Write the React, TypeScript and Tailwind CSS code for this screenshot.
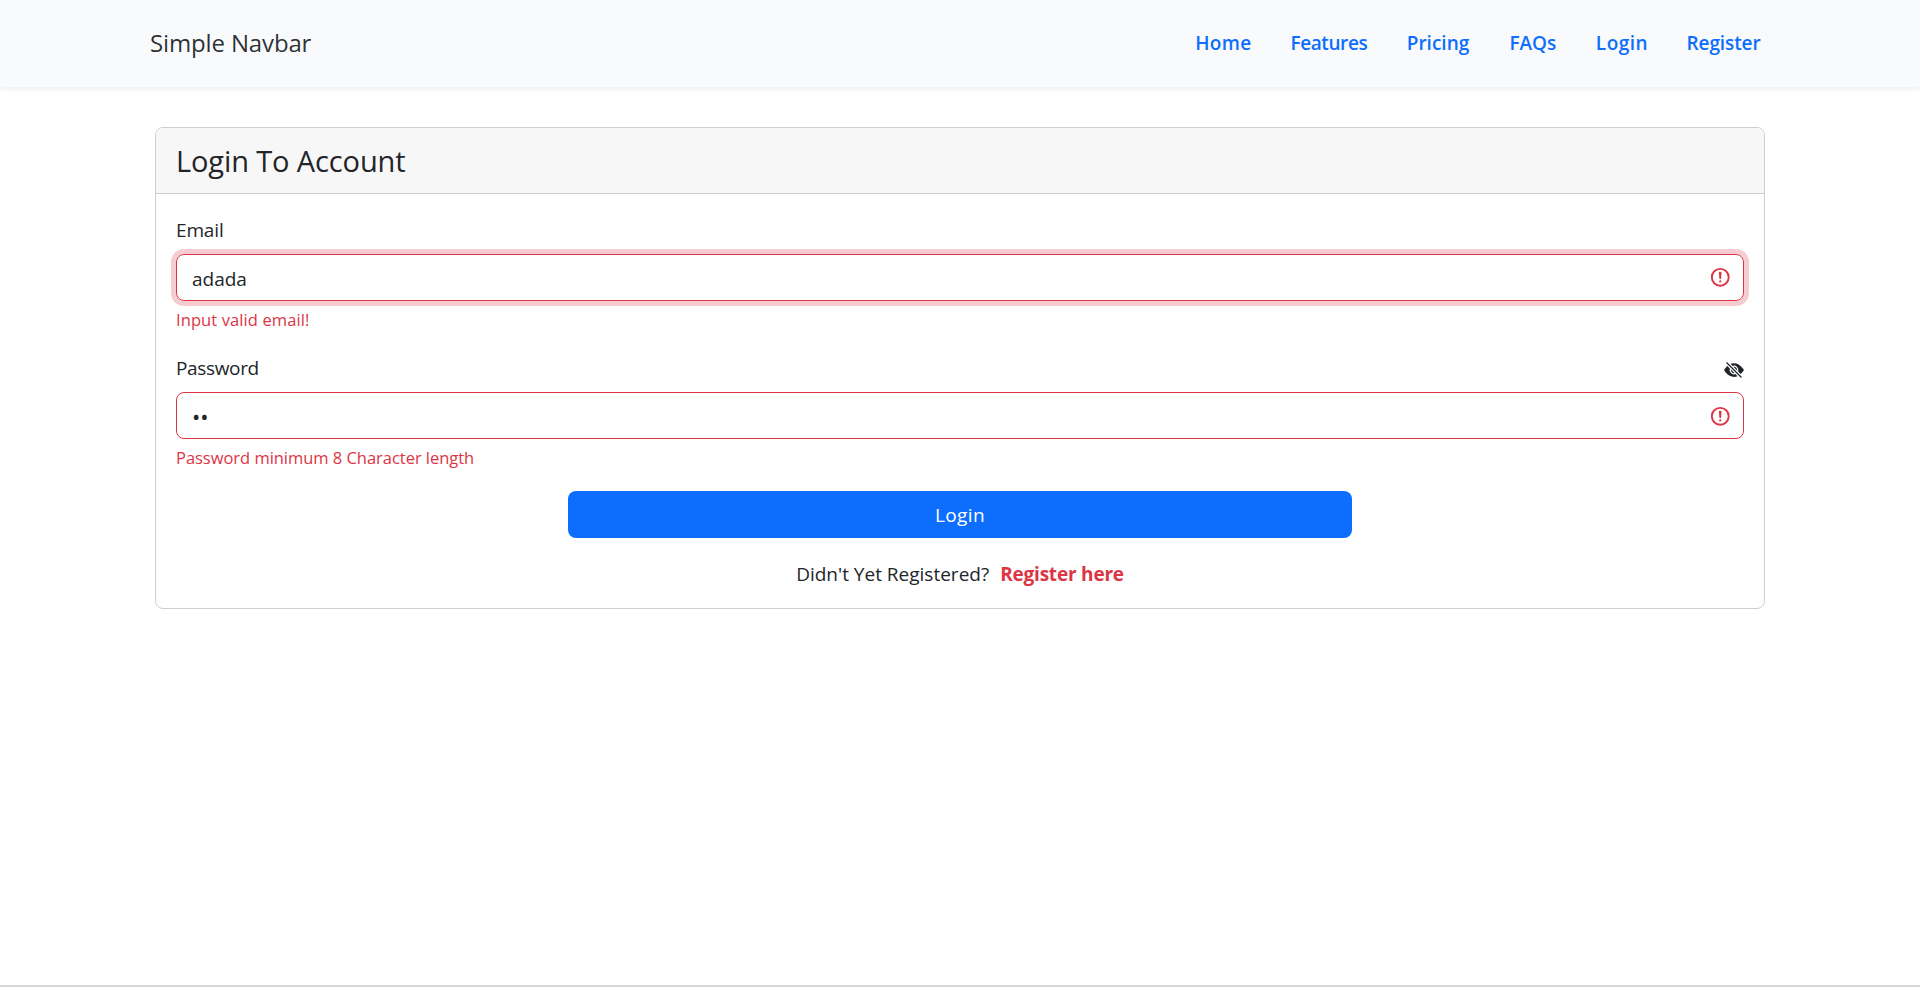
import React, { useState } from "react";
import { BsEyeFill, BsEyeSlashFill } from "react-icons/bs";

const links = [
  { label: "Home", style: "w-[55.2px] tracking-[0.3px]" },
  { label: "Features", style: "w-[76.3px] tracking-[-0.4px]" },
  { label: "Pricing", style: "w-[62.7px]" },
  { label: "FAQs", style: "w-[46.4px]" },
  { label: "Login", style: "w-[50.7px] tracking-[0.5px]" },
  { label: "Register", style: "w-[75.5px] tracking-[-0.1px]" },
];

function Navbar() {
  return (
    <nav className="h-[87px] bg-[#f8fafc] shadow-[0_2px_5px_rgba(0,0,0,0.075)]">
      <div className="mx-auto flex h-full w-[1620px] items-center justify-between pr-2">
        <a
          href="#"
          className="pb-px text-[24px] leading-9 tracking-[-0.14px] text-[#212529]/95"
        >
          Simple Navbar
        </a>
        <ul className="flex gap-10 pb-px text-[19px] leading-[30px] font-semibold text-[#0d6efd]">
          {links.map(({ label, style }) => (
            <li key={label} className={`whitespace-nowrap ${style}`}>
              <a href="#">{label}</a>
            </li>
          ))}
        </ul>
      </div>
    </nav>
  );
}

function InvalidIcon() {
  return (
    <svg
      viewBox="0 0 12 12"
      fill="none"
      stroke="#dc3545"
      className="pointer-events-none size-[22.5px] shrink-0"
    >
      <circle cx="6" cy="6" r="4.5" />
      <path strokeLinejoin="round" d="M5.8 3.6h.4L6 6.5z" />
      <circle cx="6" cy="8.2" r=".6" fill="#dc3545" stroke="none" />
    </svg>
  );
}

export default function App() {
  const [visible, setVisible] = useState(false);
  const Eye = visible ? BsEyeFill : BsEyeSlashFill;

  return (
    <div className="flex h-screen flex-col overflow-hidden bg-white font-['Open_Sans','Noto_Sans',sans-serif] text-[19px] leading-[30px] font-[370] text-[#212529]">
      <Navbar />
      <main className="mx-auto mt-10 w-[1610px]">
        <section className="h-[482px] rounded-lg border border-[#cfcfcf]">
          <header className="flex h-[66px] items-center rounded-t-[7px] border-b border-[#cfcfcf] bg-[#f7f7f7] px-5">
            <h4 className="text-[29px] leading-9 tracking-[-0.12px]">
              Login To Account
            </h4>
          </header>
          <form className="px-5 pt-[21px]" onSubmit={(e) => e.preventDefault()}>
            <label htmlFor="email" className="block tracking-[-0.15px]">
              Email
            </label>
            <div className="mt-[9px] flex h-[47px] items-center rounded-lg border border-[#dc3545] pr-3 pl-[15px] shadow-[0_0_0_5px_rgba(220,53,69,0.25)]">
              <input
                id="email"
                defaultValue="adada"
                className="min-w-0 flex-1 pt-[2px] outline-none"
              />
              <InvalidIcon />
            </div>
            <p className="mt-1.5 text-[16.5px] leading-[26px] tracking-[0.1px] text-[#dc3545]">
              Input valid email!
            </p>
            <div className="mt-5 flex items-center justify-between">
              <label htmlFor="password" className="tracking-[-0.35px]">
                Password
              </label>
              <button type="button" className="pt-1" onClick={() => setVisible(!visible)}>
                <Eye className="size-5" />
              </button>
            </div>
            <div className="mt-[9px] flex h-[47px] items-center rounded-lg border border-[#dc3545] pt-px pr-3 pl-[15px]">
              <input
                id="password"
                type={visible ? "text" : "password"}
                defaultValue="ab"
                className="min-w-0 flex-1 pb-px text-[22px] outline-none"
              />
              <InvalidIcon />
            </div>
            <p className="mt-1.5 text-[16.5px] leading-[26px] tracking-[-0.03px] text-[#dc3545]">
              Password minimum 8 Character length
            </p>
            <button
              type="submit"
              className="mx-auto mt-5 block h-[47px] w-[784px] rounded-lg bg-[#0d6efd] tracking-[0.4px] text-white"
            >
              Login
            </button>
            <p className="mt-[21px] flex justify-center gap-[11px]">
              <span>Didn't Yet Registered?</span>
              <a href="#" className="font-bold tracking-[-0.2px] text-[#dc3545]">
                Register here
              </a>
            </p>
          </form>
        </section>
      </main>
      <footer className="mt-auto h-0.5 bg-[#d8d8d8]" />
    </div>
  );
}
